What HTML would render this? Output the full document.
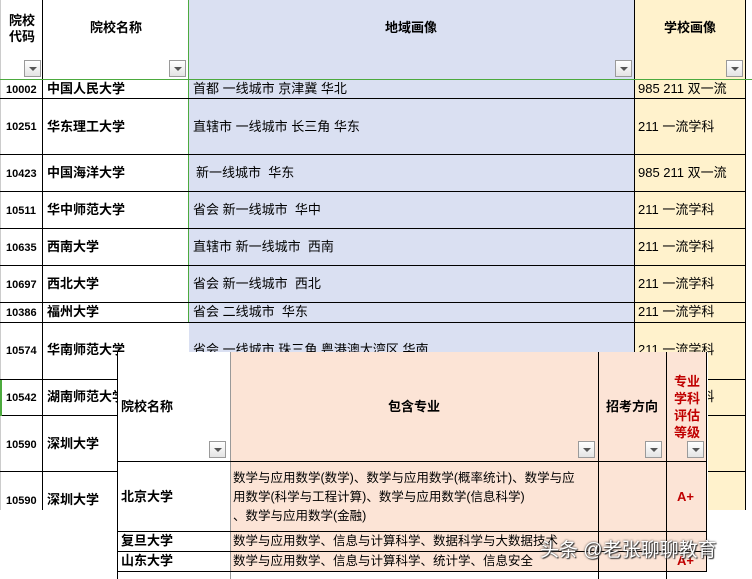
<!DOCTYPE html>
<html><head><meta charset="utf-8"><style>
*{margin:0;padding:0;box-sizing:border-box}
body{width:752px;height:579px;overflow:hidden;background:#fff;position:relative;font-family:"Liberation Sans","Noto Sans CJK SC",sans-serif;font-size:12px;color:#000}
.a{position:absolute}
.h{position:absolute;height:1px;background:#000}
.v{position:absolute;width:1px;background:#000}
.dd{position:absolute;width:17px;height:17px;border:1px solid #9a9a9a;background:linear-gradient(#fff,#e4e4e4)}
.dd:after{content:"";position:absolute;left:4px;top:6px;border-left:4px solid transparent;border-right:4px solid transparent;border-top:4px solid #555}
.b{font-weight:bold}
.t{position:absolute;white-space:nowrap;line-height:14px}
</style></head><body>
<div class="a" style="left:189px;top:0;width:445px;height:510px;background:#dae0f2"></div>
<div class="a" style="left:634px;top:0;width:111px;height:510px;background:#fff2cc"></div>
<div class="v" style="left:42px;top:0;height:510px"></div>
<div class="v" style="left:0;top:0;height:510px;background:#ccc"></div>
<div class="a" style="left:188px;top:0;height:323px;width:1px;background:#4caa3e"></div>
<div class="v" style="left:634px;top:0;height:510px"></div>
<div class="v" style="left:745px;top:0;height:510px"></div>
<div class="a" style="left:0;top:79px;width:752px;height:1px;background:#4caa3e"></div>
<div class="h" style="left:0;top:98px;width:745px"></div>
<div class="h" style="left:0;top:154px;width:745px"></div>
<div class="h" style="left:0;top:191px;width:745px"></div>
<div class="h" style="left:0;top:228px;width:745px"></div>
<div class="h" style="left:0;top:265px;width:745px"></div>
<div class="h" style="left:0;top:302px;width:745px"></div>
<div class="h" style="left:0;top:322px;width:745px"></div>
<div class="h" style="left:0;top:379px;width:745px"></div>
<div class="h" style="left:0;top:415px;width:745px"></div>
<div class="h" style="left:0;top:471px;width:745px"></div>
<div class="a" style="left:0;top:380px;width:2px;height:36px;background:#4caa3e"></div>

<div class="t b" style="left:9px;top:13px;font-size:13px;line-height:16px">院校<br>代码</div>
<div class="t b" style="left:90px;top:21px;font-size:13px">院校名称</div>
<div class="t b" style="left:385px;top:21px;font-size:13px">地域画像</div>
<div class="t b" style="left:664px;top:21px;font-size:13px">学校画像</div>
<div class="dd" style="left:24px;top:60px"></div>
<div class="dd" style="left:169px;top:60px"></div>
<div class="dd" style="left:615px;top:60px"></div>
<div class="dd" style="left:726px;top:60px"></div>

<div class="t b" style="left:6px;top:83px;font-size:11px">10002</div><div class="t b" style="left:47px;top:82px;font-size:13px">中国人民大学</div><div class="t" style="left:193px;top:82px;font-size:13px">首都 一线城市 京津冀 华北</div><div class="t" style="left:638px;top:82px;font-size:13px">985 211 双一流</div>
<div class="t b" style="left:6px;top:120px;font-size:11px">10251</div><div class="t b" style="left:47px;top:120px;font-size:13px">华东理工大学</div><div class="t" style="left:193px;top:120px;font-size:13px">直辖市 一线城市 长三角 华东</div><div class="t" style="left:638px;top:120px;font-size:13px">211 一流学科</div>
<div class="t b" style="left:6px;top:167px;font-size:11px">10423</div><div class="t b" style="left:47px;top:166px;font-size:13px">中国海洋大学</div><div class="t" style="left:196px;top:166px;font-size:13px">新一线城市&nbsp; 华东</div><div class="t" style="left:638px;top:166px;font-size:13px">985 211 双一流</div>
<div class="t b" style="left:6px;top:204px;font-size:11px">10511</div><div class="t b" style="left:47px;top:203px;font-size:13px">华中师范大学</div><div class="t" style="left:193px;top:203px;font-size:13px">省会 新一线城市&nbsp; 华中</div><div class="t" style="left:638px;top:203px;font-size:13px">211 一流学科</div>
<div class="t b" style="left:6px;top:241px;font-size:11px">10635</div><div class="t b" style="left:47px;top:240px;font-size:13px">西南大学</div><div class="t" style="left:193px;top:240px;font-size:13px">直辖市 新一线城市&nbsp; 西南</div><div class="t" style="left:638px;top:240px;font-size:13px">211 一流学科</div>
<div class="t b" style="left:6px;top:278px;font-size:11px">10697</div><div class="t b" style="left:47px;top:277px;font-size:13px">西北大学</div><div class="t" style="left:193px;top:277px;font-size:13px">省会 新一线城市&nbsp; 西北</div><div class="t" style="left:638px;top:277px;font-size:13px">211 一流学科</div>
<div class="t b" style="left:6px;top:306px;font-size:11px">10386</div><div class="t b" style="left:47px;top:305px;font-size:13px">福州大学</div><div class="t" style="left:193px;top:305px;font-size:13px">省会 二线城市&nbsp; 华东</div><div class="t" style="left:638px;top:305px;font-size:13px">211 一流学科</div>
<div class="t b" style="left:6px;top:344px;font-size:11px">10574</div><div class="t b" style="left:47px;top:343px;font-size:13px">华南师范大学</div><div class="t" style="left:193px;top:343px;font-size:13px">省会 一线城市 珠三角 粤港澳大湾区 华南</div><div class="t" style="left:638px;top:343px;font-size:13px">211 一流学科</div>
<div class="t b" style="left:6px;top:391px;font-size:11px">10542</div><div class="t b" style="left:47px;top:390px;font-size:13px">湖南师范大学</div><div class="t" style="left:638px;top:390px;font-size:13px">211 一流学科</div>
<div class="t b" style="left:6px;top:438px;font-size:11px">10590</div><div class="t b" style="left:47px;top:437px;font-size:13px">深圳大学</div>
<div class="t b" style="left:6px;top:494px;font-size:11px">10590</div><div class="t b" style="left:47px;top:493px;font-size:13px">深圳大学</div>

<div class="a" style="left:117px;top:352px;width:591px;height:227px;background:#fff"></div>
<div class="a" style="left:231px;top:352px;width:436px;height:220px;background:#fce4d6"></div>
<div class="a" style="left:667px;top:352px;width:40px;height:220px;background:#fce4d6"></div>
<div class="v" style="left:117px;top:352px;height:227px"></div>
<div class="a" style="left:230px;top:352px;height:227px;width:1px;background:#999"></div>
<div class="v" style="left:598px;top:352px;height:227px"></div>
<div class="v" style="left:666px;top:352px;height:227px"></div>
<div class="v" style="left:706px;top:352px;height:220px"></div>
<div class="h" style="left:117px;top:461px;width:590px"></div>
<div class="h" style="left:117px;top:531px;width:590px"></div>
<div class="h" style="left:117px;top:551px;width:590px"></div>
<div class="h" style="left:117px;top:571px;width:590px"></div>

<div class="t b" style="left:121px;top:400px;font-size:13px">院校名称</div>
<div class="t b" style="left:388px;top:400px;font-size:13px">包含专业</div>
<div class="t b" style="left:606px;top:400px;font-size:13px">招考方向</div>
<div class="t b" style="left:674px;top:373px;font-size:13px;line-height:17px;color:#c00000">专业<br>学科<br>评估<br>等级</div>
<div class="dd" style="left:209px;top:441px"></div>
<div class="dd" style="left:578px;top:441px"></div>
<div class="dd" style="left:645px;top:441px"></div>
<div class="dd" style="left:687px;top:441px"></div>

<div class="t b" style="left:121px;top:490px;font-size:13px">北京大学</div>
<div class="t" style="left:233px;top:469px;font-size:12.5px;line-height:19px">数学与应用数学(数学)、数学与应用数学(概率统计)、数学与应<br>用数学(科学与工程计算)、数学与应用数学(信息科学)<br>、数学与应用数学(金融)</div>
<div class="t b" style="left:677px;top:490px;font-size:13px;color:#c00000">A+</div>
<div class="t b" style="left:121px;top:534px;font-size:13px">复旦大学</div>
<div class="t" style="left:233px;top:534px;font-size:12.5px">数学与应用数学、信息与计算科学、数据科学与大数据技术</div>
<div class="t b" style="left:121px;top:554px;font-size:13px">山东大学</div>
<div class="t" style="left:233px;top:554px;font-size:12.5px">数学与应用数学、信息与计算科学、统计学、信息安全</div>
<div class="t b" style="left:677px;top:554px;font-size:13px;color:#c00000">A+</div>

<div class="t" style="left:540px;top:540px;font-size:19px;line-height:22px;color:#fff;text-shadow:0 0 2px #333,1px 1px 1px #333">头条 @老张聊聊教育</div>
</body></html>
